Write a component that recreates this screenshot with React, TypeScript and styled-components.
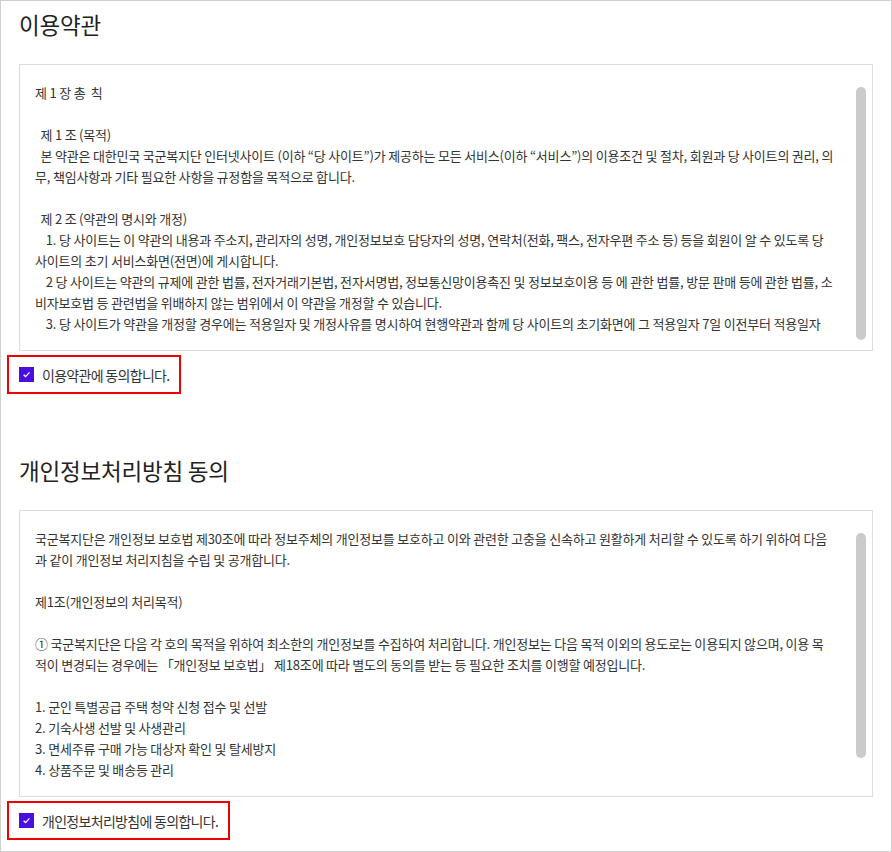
import styled, { createGlobalStyle } from 'styled-components';

const GlobalStyle = createGlobalStyle`
  html, body {
    margin: 0;
    padding: 0;
    background: #fff;
  }
  body {
    font-family: "Noto Sans CJK KR", "Noto Sans", sans-serif;
    color: #333;
  }
  * {
    box-sizing: border-box;
  }
`;

const Page = styled.div`
  width: 892px;
  height: 852px;
  border: 1px solid #cfcfcf;
  padding: 0 18px;
  overflow: hidden;
`;

const Section = styled.section<{ $last?: boolean }>`
  margin-bottom: ${(p) => (p.$last ? '0' : '60px')};
`;

const Title = styled.h2`
  margin: 7px 0 24px;
  font-size: 22.5px;
  line-height: 32px;
  font-weight: 400;
  color: #222;
  letter-spacing: -0.2px;
`;

const Box = styled.div`
  position: relative;
  height: 287px;
  border: 1px solid #dcdcdc;
  padding: 17px 7px 12px 15px;
`;

const Scroll = styled.div`
  height: 256px;
  overflow-y: auto;
  scrollbar-width: none;

  &::-webkit-scrollbar {
    display: none;
  }
`;

const Thumb = styled.div<{ $size: number }>`
  position: absolute;
  top: 22px;
  right: 6px;
  width: 10px;
  height: ${(p) => p.$size}px;
  border-radius: 5px;
  background: #cbcbcb;
`;

const Text = styled.div`
  font-size: 13px;
  line-height: 21px;
  color: #333;
  white-space: pre-wrap;
  padding-right: 31px;
  letter-spacing: -0.2px;
`;

const Agree = styled.label`
  display: inline-flex;
  align-items: center;
  gap: 8px;
  margin: 4px 0 0 -12px;
  padding: 10px;
  border: 2px solid #f00000;
  font-size: 14px;
  line-height: 14px;
  letter-spacing: -0.7px;
  color: #333;
  cursor: pointer;
`;

const Check = styled.span`
  width: 15px;
  height: 15px;
  background: #4b0ee0;
  display: flex;
  align-items: center;
  justify-content: center;
`;

const terms = `제 1 장 총  칙

  제 1 조 (목적)
  본 약관은 대한민국 국군복지단 인터넷사이트 (이하 “당 사이트”)가 제공하는 모든 서비스(이하 “서비스”)의 이용조건 및 절차, 회원과 당 사이트의 권리, 의무, 책임사항과 기타 필요한 사항을 규정함을 목적으로 합니다.

  제 2 조 (약관의 명시와 개정)
    1. 당 사이트는 이 약관의 내용과 주소지, 관리자의 성명, 개인정보보호 담당자의 성명, 연락처(전화, 팩스, 전자우편 주소 등) 등을 회원이 알 수 있도록 당 사이트의 초기 서비스화면(전면)에 게시합니다.
    2 당 사이트는 약관의 규제에 관한 법률, 전자거래기본법, 전자서명법, 정보통신망이용촉진 및 정보보호이용 등 에 관한 법률, 방문 판매 등에 관한 법률, 소비자보호법 등 관련법을 위배하지 않는 범위에서 이 약관을 개정할 수 있습니다.
    3. 당 사이트가 약관을 개정할 경우에는 적용일자 및 개정사유를 명시하여 현행약관과 함께 당 사이트의 초기화면에 그 적용일자 7일 이전부터 적용일자`;

const privacy = `국군복지단은 개인정보 보호법 제30조에 따라 정보주체의 개인정보를 보호하고 이와 관련한 고충을 신속하고 원활하게 처리할 수 있도록 하기 위하여 다음과 같이 개인정보 처리지침을 수립 및 공개합니다.

제1조(개인정보의 처리목적)

① 국군복지단은 다음 각 호의 목적을 위하여 최소한의 개인정보를 수집하여 처리합니다. 개인정보는 다음 목적 이외의 용도로는 이용되지 않으며, 이용 목적이 변경되는 경우에는 「개인정보 보호법」 제18조에 따라 별도의 동의를 받는 등 필요한 조치를 이행할 예정입니다.

1. 군인 특별공급 주택 청약 신청 접수 및 선발
2. 기숙사생 선발 및 사생관리
3. 면세주류 구매 가능 대상자 확인 및 탈세방지
4. 상품주문 및 배송등 관리`;

const CheckMark = () => (
  <svg width="9" height="9" viewBox="0 0 10 10">
    <path d="M1.8 5.2 L4 7.3 L8.3 2.7" fill="none" stroke="#fff" strokeWidth="1.4" />
  </svg>
);

type AgreementProps = {
  title: string;
  body: string;
  label: string;
  thumb: number;
  last?: boolean;
};

const Agreement = ({ title, body, label, thumb, last }: AgreementProps) => (
  <Section $last={last}>
    <Title>{title}</Title>
    <Box>
      <Scroll>
        <Text>{body}</Text>
      </Scroll>
      <Thumb $size={thumb} />
    </Box>
    <Agree>
      <Check>
        <CheckMark />
      </Check>
      {label}
    </Agree>
  </Section>
);

const App = () => {
  return (
    <>
      <GlobalStyle />
      <Page>
        <Agreement title="이용약관" body={terms} label="이용약관에 동의합니다." thumb={253} />
        <Agreement title="개인정보처리방침 동의" body={privacy} label="개인정보처리방침에 동의합니다." thumb={225} last />
      </Page>
    </>
  );
};

export default App;
